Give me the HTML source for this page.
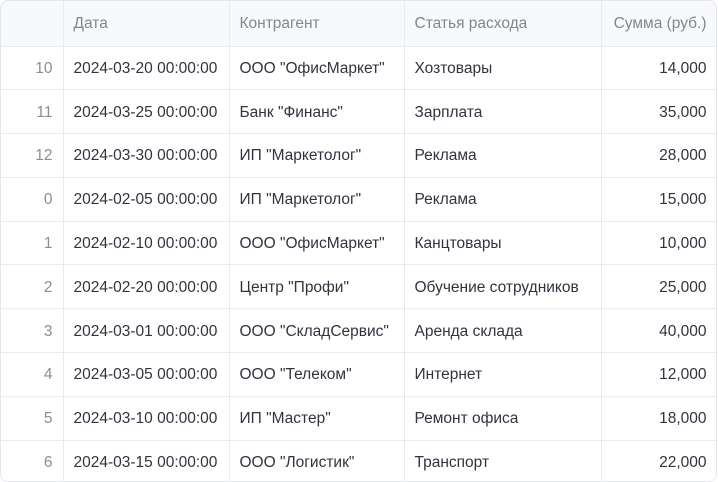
<!DOCTYPE html><html><head><style>
body{margin:0;background:#fff;font-family:"Liberation Sans",sans-serif;font-size:15.5px;color:#31333f}
.w{position:absolute;left:0;top:0;width:715px;height:480px;border:1px solid #e6e7ea;border-radius:8px;overflow:hidden}
table{border-collapse:collapse;table-layout:fixed;width:716px}
td,th{height:42.8px;border-right:1px solid #e9eaed;border-bottom:1px solid #e9eaed;padding:2px 10px 0;white-space:nowrap;overflow:hidden;text-align:left;font-weight:normal;box-sizing:border-box}
th{background:#f8f9fb;color:#828592;height:45px}
td.i{color:#8a8d98;text-align:right;background:#fff}
.r{text-align:right}
tr{height:43.8px}
tr:first-child{height:45px}
</style></head><body><div class="w"><table>
<colgroup><col style="width:62px"><col style="width:166px"><col style="width:175px"><col style="width:197px"><col style="width:116px"></colgroup>
<tr><th></th><th>Дата</th><th>Контрагент</th><th>Статья расхода</th><th class="r">Сумма (руб.)</th></tr>
<tr><td class="i">10</td><td>2024-03-20 00:00:00</td><td>ООО "ОфисМаркет"</td><td>Хозтовары</td><td class="r">14,000</td></tr>
<tr><td class="i">11</td><td>2024-03-25 00:00:00</td><td>Банк "Финанс"</td><td>Зарплата</td><td class="r">35,000</td></tr>
<tr><td class="i">12</td><td>2024-03-30 00:00:00</td><td>ИП "Маркетолог"</td><td>Реклама</td><td class="r">28,000</td></tr>
<tr><td class="i">0</td><td>2024-02-05 00:00:00</td><td>ИП "Маркетолог"</td><td>Реклама</td><td class="r">15,000</td></tr>
<tr><td class="i">1</td><td>2024-02-10 00:00:00</td><td>ООО "ОфисМаркет"</td><td>Канцтовары</td><td class="r">10,000</td></tr>
<tr><td class="i">2</td><td>2024-02-20 00:00:00</td><td>Центр "Профи"</td><td>Обучение сотрудников</td><td class="r">25,000</td></tr>
<tr><td class="i">3</td><td>2024-03-01 00:00:00</td><td>ООО "СкладСервис"</td><td>Аренда склада</td><td class="r">40,000</td></tr>
<tr><td class="i">4</td><td>2024-03-05 00:00:00</td><td>ООО "Телеком"</td><td>Интернет</td><td class="r">12,000</td></tr>
<tr><td class="i">5</td><td>2024-03-10 00:00:00</td><td>ИП "Мастер"</td><td>Ремонт офиса</td><td class="r">18,000</td></tr>
<tr><td class="i">6</td><td>2024-03-15 00:00:00</td><td>ООО "Логистик"</td><td>Транспорт</td><td class="r">22,000</td></tr>
</table></div></body></html>
